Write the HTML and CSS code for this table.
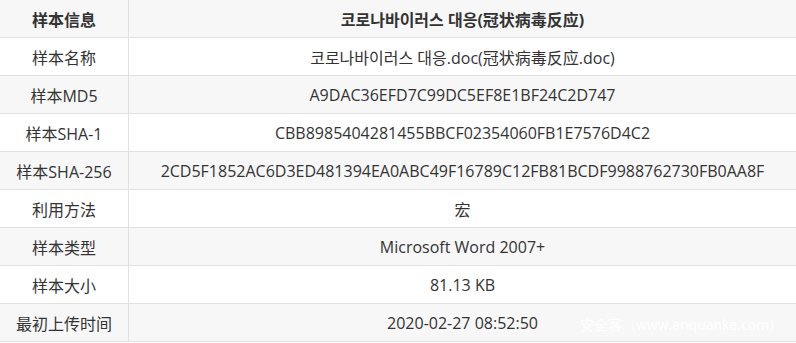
FILE: index.html
```html
<!DOCTYPE html>
<html lang="zh">
<head>
<meta charset="utf-8">
<link rel="stylesheet" href="styles.css">
</head>
<body>
<div class="wrap">
<table class="info">
  <tr class="head"><th class="k">样本信息</th><th class="v">코로나바이러스 대응(冠状病毒反应)</th></tr>
  <tr><td class="k">样本名称</td><td class="v">코로나바이러스 대응.doc(冠状病毒反应.doc)</td></tr>
  <tr><td class="k">样本MD5</td><td class="v">A9DAC36EFD7C99DC5EF8E1BF24C2D747</td></tr>
  <tr><td class="k">样本SHA-1</td><td class="v">CBB8985404281455BBCF02354060FB1E7576D4C2</td></tr>
  <tr><td class="k">样本SHA-256</td><td class="v">2CD5F1852AC6D3ED481394EA0ABC49F16789C12FB81BCDF9988762730FB0AA8F</td></tr>
  <tr><td class="k">利用方法</td><td class="v">宏</td></tr>
  <tr><td class="k">样本类型</td><td class="v">Microsoft Word 2007+</td></tr>
  <tr><td class="k">样本大小</td><td class="v">81.13 KB</td></tr>
  <tr><td class="k">最初上传时间</td><td class="v">2020-02-27 08:52:50</td></tr>
</table>
<span class="mark">安全客（www.anquanke.com）</span>
</div>
</body>
</html>
```
FILE: styles.css
```css
html, body {
  margin: 0;
  padding: 0;
  background: #fff;
}
.wrap {
  position: relative;
  width: 796px;
}
.info {
  width: 796px;
  border-collapse: collapse;
  table-layout: fixed;
  font-family: "Open Sans", "Noto Sans CJK SC", sans-serif;
  font-size: 16px;
  color: #333;
}
.info th, .info td {
  height: 37px;
  padding: 0;
  text-align: center;
  vertical-align: middle;
  border-bottom: 1px solid #e1e1e1;
  white-space: nowrap;
}
.info .k {
  width: 128px;
  border-right: 1px solid #e1e1e1;
}
.info th {
  font-weight: bold;
}
.info tr:nth-child(odd) {
  background: #f7f7f7;
}
.mark {
  position: absolute;
  left: 580px;
  top: 314px;
  font-family: "Open Sans", "Noto Sans CJK SC", sans-serif;
  font-size: 14px;
  color: #fff;
}
```
